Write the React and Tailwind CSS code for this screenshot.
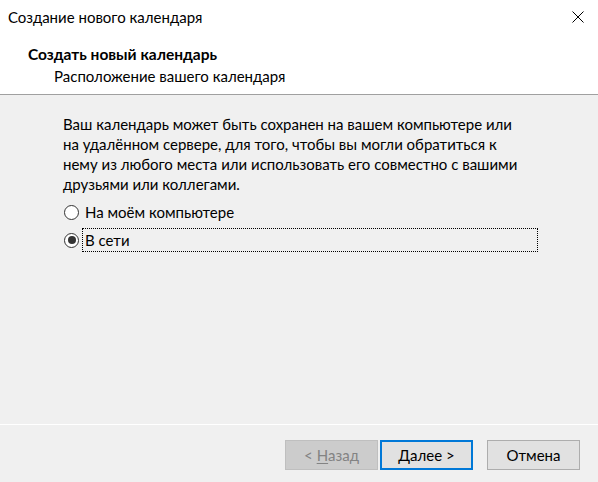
import React, { useState } from 'react';

const font = { fontFamily: 'Lato, "Noto Sans", sans-serif' };

const description = [
  'Ваш календарь может быть сохранен на вашем компьютере или',
  'на удалённом сервере, для того, чтобы вы могли обратиться к',
  'нему из любого места или использовать его совместно с вашими',
  'друзьями или коллегами.',
];

const Radio = ({ checked, label, focused, onSelect }) => (
  <div className="flex items-center h-[28px]" onClick={onSelect}>
    <span className="w-[15px] h-[15px] ml-[1px] rounded-full border border-[#333333] bg-white flex items-center justify-center shrink-0">
      {checked && <span className="w-[8px] h-[8px] rounded-full bg-[#333333]" />}
    </span>
    <span
      className={`ml-[3px] h-[24px] flex items-center pl-[2px] text-[15px] text-black ${
        focused ? 'w-[456px] border border-dotted border-black' : 'border border-transparent'
      }`}
    >
      {label}
    </span>
  </div>
);

const Button = ({ children, disabled, primary }) => (
  <button
    className={`w-[93px] h-[30px] text-[15px] flex items-center justify-center ${
      disabled
        ? 'bg-[#cccccc] border border-[#bfbfbf] text-[#838383]'
        : primary
        ? 'bg-[#e1e1e1] border-2 border-[#0078d7] text-black'
        : 'bg-[#e1e1e1] border border-[#adadad] text-black'
    }`}
  >
    {children}
  </button>
);

export default function App() {
  const [location, setLocation] = useState('network');

  return (
    <div className="w-[598px] h-[482px] bg-[#f0f0f0] flex flex-col" style={font}>
      {/* title bar + wizard header */}
      <div className="bg-white h-[95px] border-b border-[#a0a0a0] shrink-0">
        <div className="h-[34px] flex items-center justify-between pl-[8px] pr-[14px]">
          <span className="text-[15px] text-black">Создание нового календаря</span>
          <svg width="12" height="12" viewBox="0 0 12 12">
            <path d="M0.5 0.5L11.5 11.5M11.5 0.5L0.5 11.5" stroke="#000" strokeWidth="1" />
          </svg>
        </div>
        <div className="pl-[28px] mt-[10px] text-[15.5px] font-bold leading-[20px] text-black">
          Создать новый календарь
        </div>
        <div className="pl-[54px] mt-[2px] text-[15px] leading-[20px] text-black">
          Расположение вашего календаря
        </div>
      </div>

      {/* page body */}
      <div className="flex-1 pl-[63px] pt-[19px]">
        <div className="text-[15px] leading-[20px] text-black">
          {description.map((line) => (
            <div key={line} className="whitespace-nowrap">
              {line}
            </div>
          ))}
        </div>
        <div className="mt-[4px]">
          <Radio
            label="На моём компьютере"
            checked={location === 'local'}
            onSelect={() => setLocation('local')}
          />
          <Radio
            label="В сети"
            checked={location === 'network'}
            focused={location === 'network'}
            onSelect={() => setLocation('network')}
          />
        </div>
      </div>

      {/* buttons */}
      <div className="h-[58px] border-t border-white flex items-start pt-[15px] shrink-0">
        <div className="ml-[285px] flex">
          <Button disabled>
            &lt; <span className="underline underline-offset-2 ml-[4px]">Н</span>азад
          </Button>
          <div className="ml-[2px]">
            <Button primary>
              <span className="underline underline-offset-2">Д</span>алее &gt;
            </Button>
          </div>
          <div className="ml-[14px]">
            <Button>Отмена</Button>
          </div>
        </div>
      </div>
    </div>
  );
}
